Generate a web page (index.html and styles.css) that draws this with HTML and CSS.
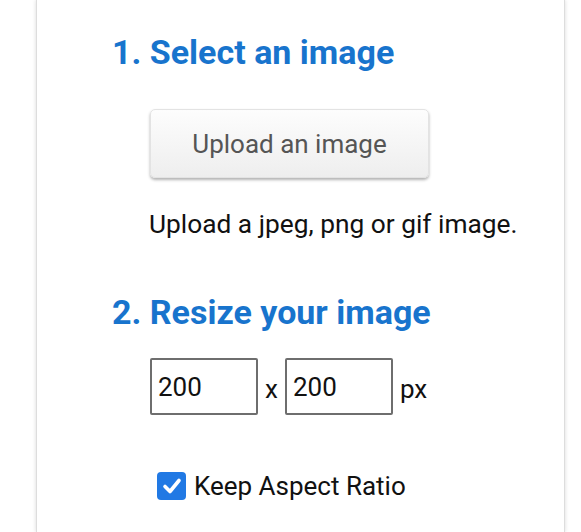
FILE: index.html
```html
<!DOCTYPE html>
<html lang="en">
<head>
    <meta charset="UTF-8">
    <title>Image Resizer</title>
    <link rel="stylesheet" href="styles.css">
</head>
<body>
<div class="card">
    <h2 class="step">1. Select an image</h2>
    <div class="section">
        <button class="uploadBtn" type="button">Upload an image</button>
        <p class="hint">Upload a jpeg, png or gif image.</p>
    </div>

    <h2 class="step step2">2. Resize your image</h2>
    <div class="section">
        <div class="sizeRow">
            <input class="sizeInput" type="text" value="200">
            <span class="sep">x</span>
            <input class="sizeInput" type="text" value="200">
            <span class="unit">px</span>
        </div>
        <label class="keepRatio">
            <span class="check">
                <svg width="20" height="18" viewBox="0 0 20 18"><path d="M3 9.5 L8 14.5 L17 3.5" fill="none" stroke="#fff" stroke-width="3.6" stroke-linecap="round" stroke-linejoin="round"/></svg>
            </span>
            Keep Aspect Ratio
        </label>
    </div>
</div>
</body>
</html>
```

FILE: styles.css
```css
body {
    margin: 0;
    background-color: #fff;
    font-family: Roboto, "Liberation Sans", sans-serif;
    color: #111;
}

.card {
    margin-left: 36px;
    width: 529px;
    min-height: 532px;
    box-sizing: border-box;
    padding: 32px 0 0 75px;
    background-color: #fff;
    border-left: 1px solid #ddd;
    border-right: 1px solid #ddd;
    box-shadow: 0 0 4px rgba(0, 0, 0, 0.15);
}

.step {
    margin: 0;
    font-size: 34px;
    font-weight: 700;
    color: #1874cd;
    line-height: 40px;
}

.step2 {
    margin-top: 52px;
}

.section {
    padding-left: 38px;
}

.uploadBtn {
    margin-top: 37px;
    width: 279px;
    height: 69px;
    border: 1px solid #e3e3e3;
    border-radius: 5px;
    background: linear-gradient(#fdfdfd, #eeeeee);
    box-shadow: 0 2px 3px rgba(0, 0, 0, 0.3);
    font-family: Roboto, "Liberation Sans", sans-serif;
    font-size: 26px;
    color: #555;
}

.hint {
    margin: 30px 0 0 -1px;
    font-size: 26.3px;
    line-height: 32px;
}

.sizeRow {
    margin-top: 26px;
    display: flex;
    align-items: center;
    gap: 7px;
    font-size: 26px;
}

.sizeInput {
    width: 108px;
    height: 57px;
    box-sizing: border-box;
    border: 2px solid #6e6e6e;
    border-radius: 2px;
    padding: 0 6px;
    font-family: Roboto, "Liberation Sans", sans-serif;
    font-size: 26px;
    color: #111;
}

.sep, .unit {
    padding-top: 4px;
}

.keepRatio {
    margin-top: 56px;
    margin-left: 7px;
    display: flex;
    align-items: center;
    gap: 8px;
    font-size: 26px;
}

.check {
    width: 29px;
    height: 28px;
    border-radius: 4px;
    background-color: #2179e4;
    display: flex;
    align-items: center;
    justify-content: center;
}
```
